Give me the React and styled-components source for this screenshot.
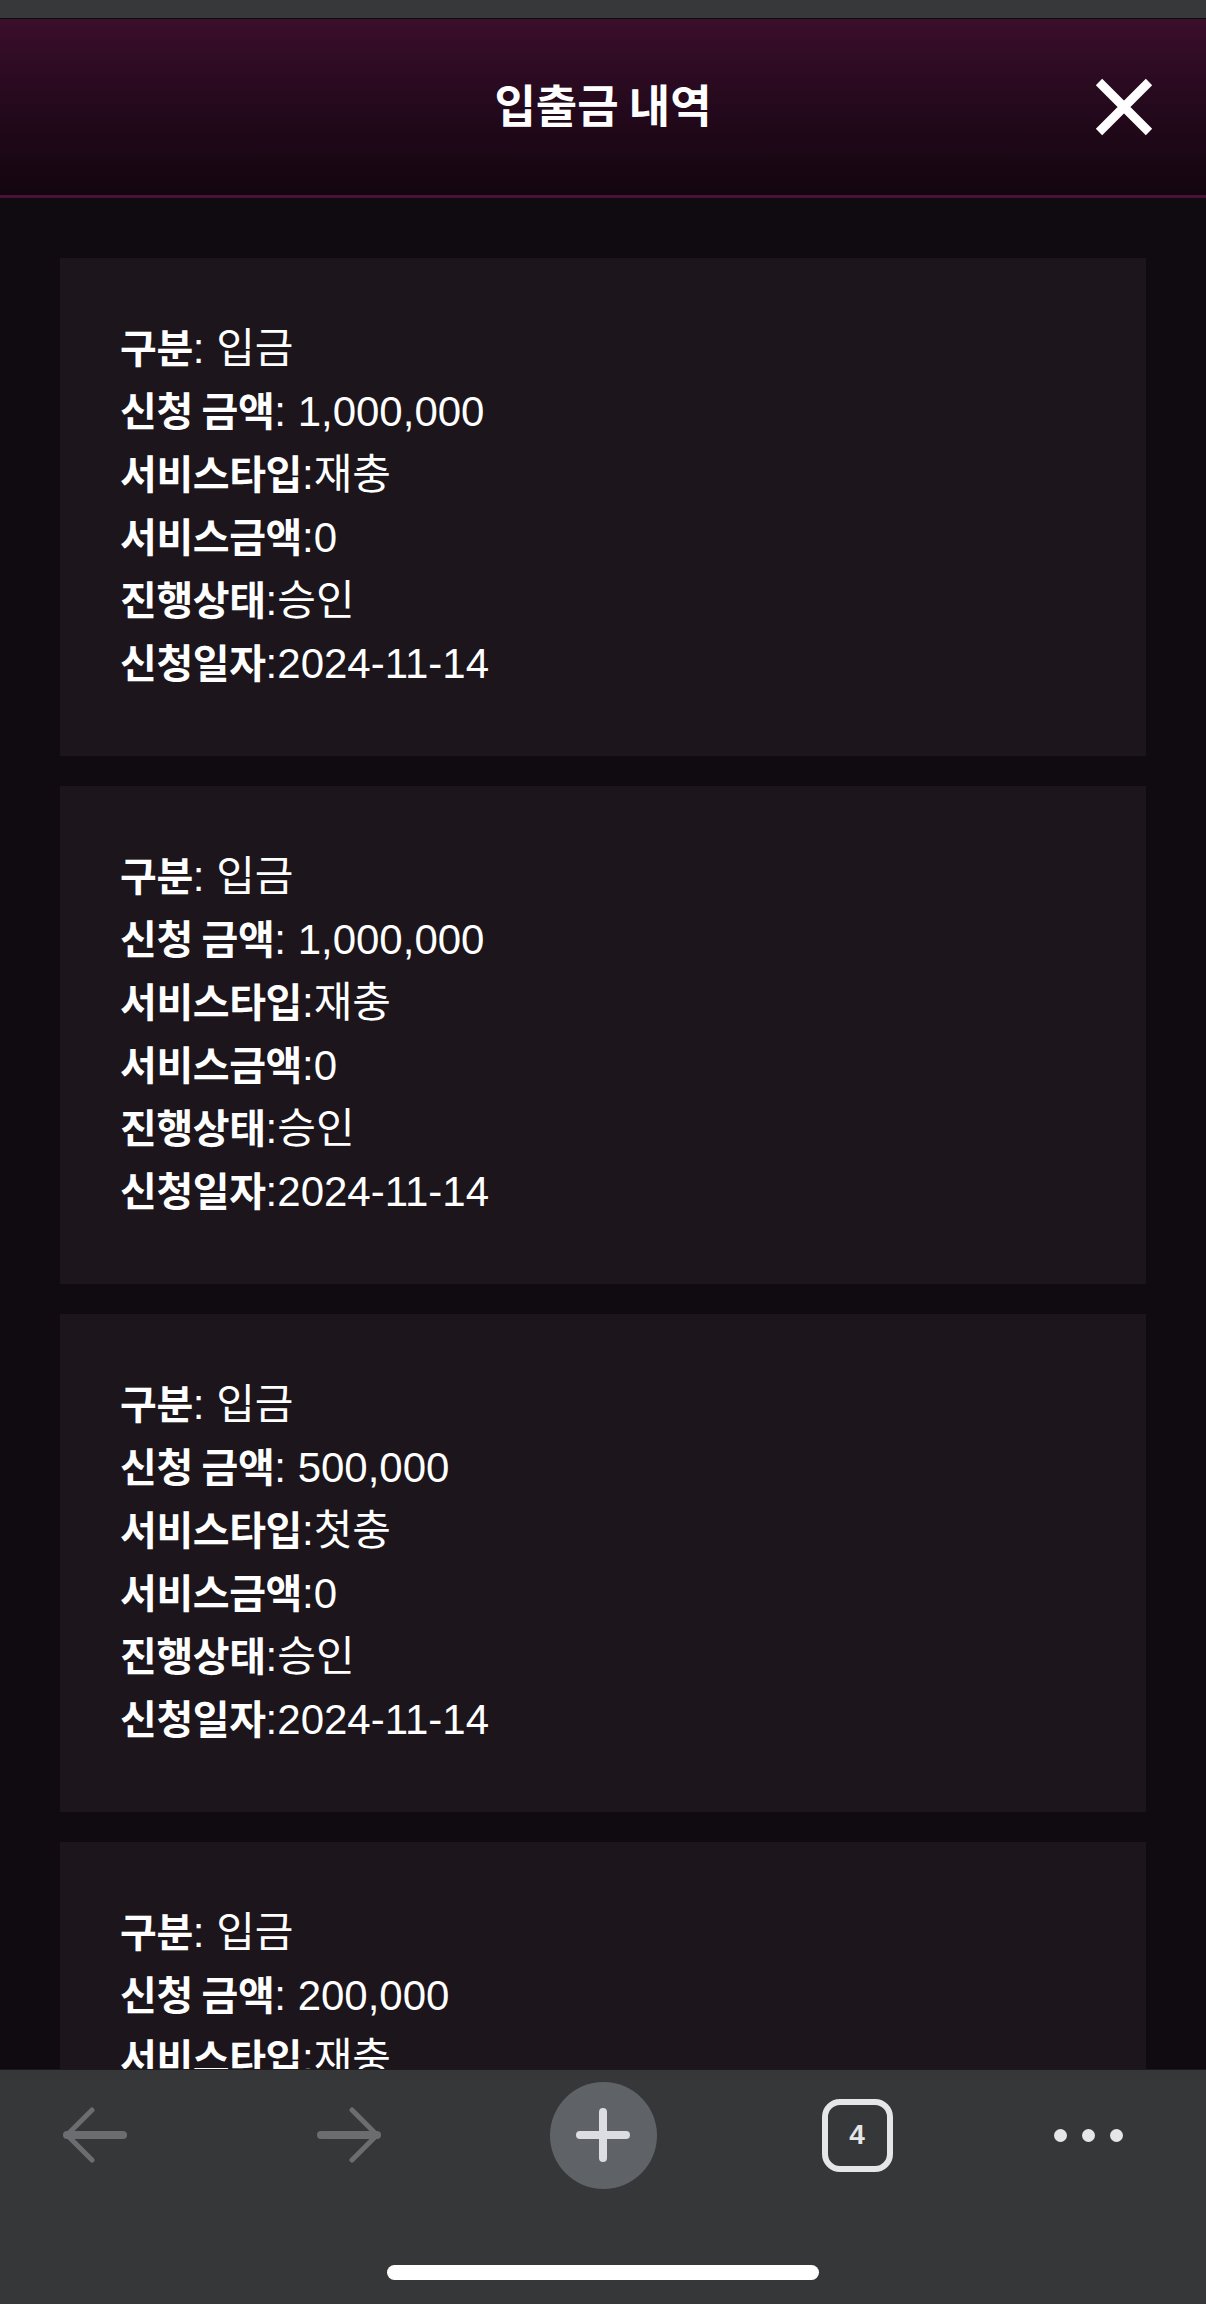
import styled, { createGlobalStyle } from "styled-components";

const GlobalStyle = createGlobalStyle`
  html, body {
    margin: 0;
    padding: 0;
    background: #0f0b10;
  }
  * {
    box-sizing: border-box;
  }
`;

const records = [
  { type: "입금", amount: "1,000,000", service: "재충", bonus: "0", status: "승인", date: "2024-11-14" },
  { type: "입금", amount: "1,000,000", service: "재충", bonus: "0", status: "승인", date: "2024-11-14" },
  { type: "입금", amount: "500,000", service: "첫충", bonus: "0", status: "승인", date: "2024-11-14" },
  { type: "입금", amount: "200,000", service: "재충", bonus: "0", status: "승인", date: "2024-11-14" },
];

function ArrowIcon({ flip }) {
  return (
    <svg
      width="66"
      height="56"
      viewBox="0 0 66 56"
      fill="none"
      stroke="#6c6d70"
      strokeLinecap="round"
      strokeLinejoin="round"
      style={flip ? { transform: "scaleX(-1)" } : undefined}
    >
      <path d="M5 28 H61" strokeWidth="8" />
      <path d="M30 3 L5 28 L30 53" strokeWidth="5" />
    </svg>
  );
}

function CloseIcon() {
  return (
    <svg width="58" height="58" viewBox="0 0 58 58" stroke="#ffffff" strokeWidth="9">
      <path d="M4 4 L54 54 M54 4 L4 54" />
    </svg>
  );
}

export default function App() {
  return (
    <>
      <GlobalStyle />
      <Frame>
        <StatusStrip />
        <Header>
          <span />
          <Title>입출금 내역</Title>
          <CloseButton aria-label="닫기">
            <CloseIcon />
          </CloseButton>
        </Header>

        <List>
          {records.map((r, i) => (
            <Card key={i}>
              <Line>
                <Label>구분</Label>
                <Value>: {r.type}</Value>
              </Line>
              <Line>
                <Label>신청 금액</Label>
                <Value>: {r.amount}</Value>
              </Line>
              <Line>
                <Label>서비스타입</Label>
                <Value>:{r.service}</Value>
              </Line>
              <Line>
                <Label>서비스금액</Label>
                <Value>:{r.bonus}</Value>
              </Line>
              <Line>
                <Label>진행상태</Label>
                <Value>:{r.status}</Value>
              </Line>
              <Line>
                <Label>신청일자</Label>
                <Value>:{r.date}</Value>
              </Line>
            </Card>
          ))}
        </List>

        <BottomBar>
          <IconRow>
            <Slot>
              <ArrowIcon />
            </Slot>
            <Slot>
              <ArrowIcon flip />
            </Slot>
            <Slot>
              <PlusButton>
                <svg width="56" height="56" viewBox="0 0 56 56" stroke="#dcdde0" strokeWidth="8" strokeLinecap="round">
                  <path d="M28 5 V51 M5 28 H51" />
                </svg>
              </PlusButton>
            </Slot>
            <Slot>
              <TabCount>4</TabCount>
            </Slot>
            <Slot>
              <Dots>
                <Dot />
                <Dot />
                <Dot />
              </Dots>
            </Slot>
          </IconRow>
          <HomeIndicator />
        </BottomBar>
      </Frame>
    </>
  );
}

const Frame = styled.div`
  height: 100vh;
  display: flex;
  flex-direction: column;
  overflow: hidden;
  background: #0f0b10;
  font-family: "Liberation Sans", "Noto Sans CJK KR", sans-serif;
  color: #ffffff;
`;

const StatusStrip = styled.div`
  flex: 0 0 19px;
  background: #37383a;
  border-bottom: 1px solid #0c0c0d;
`;

const Header = styled.header`
  flex: 0 0 179px;
  display: grid;
  grid-template-columns: 1fr auto 1fr;
  align-items: center;
  background: linear-gradient(180deg, #3b0e2c 0%, #24091c 50%, #13060f 100%);
  border-bottom: 3px solid #4b1237;
`;

const Title = styled.h1`
  margin: 0 0 8px;
  font-family: "Noto Sans CJK KR", sans-serif;
  font-size: 45px;
  font-weight: 700;
  letter-spacing: 0;
  color: #ffffff;
`;

const CloseButton = styled.button`
  justify-self: end;
  margin-right: 53px;
  padding: 0;
  border: 0;
  background: none;
  display: flex;
  line-height: 0;
`;

const List = styled.main`
  flex: 1;
  min-height: 0;
  overflow: hidden;
  display: flex;
  flex-direction: column;
  gap: 30px;
  padding: 60px 60px 0;
`;

const Card = styled.section`
  flex: 0 0 auto;
  background: #1c151c;
  padding: 58px 60px 62px;
`;

const Line = styled.p`
  margin: 0;
  height: 63px;
  display: flex;
  align-items: baseline;
  padding-top: 10px;
  white-space: nowrap;
`;

const Label = styled.strong`
  font-family: "Noto Sans CJK KR", sans-serif;
  font-size: 40px;
  line-height: 1;
  font-weight: 700;
  letter-spacing: -0.4px;
`;

const Value = styled.span`
  font-size: 42px;
  line-height: 1;
  font-weight: 400;
  white-space: pre;
`;

const BottomBar = styled.nav`
  position: fixed;
  left: 0;
  right: 0;
  bottom: 0;
  height: 235px;
  background: #363739;
  border-top: 1px solid #1a1a1b;
  display: flex;
  flex-direction: column;
  align-items: center;
  padding-top: 11px;
`;

const IconRow = styled.div`
  display: grid;
  grid-template-columns: repeat(4, 254px) 1fr;
  width: calc(100% + 32px);
  margin-left: -32px;
  height: 108px;
  align-items: center;
`;

const Slot = styled.div`
  display: flex;
  justify-content: center;
  align-items: center;
`;

const PlusButton = styled.div`
  width: 107px;
  height: 107px;
  border-radius: 50%;
  background: #5f6267;
  display: flex;
  align-items: center;
  justify-content: center;
`;

const TabCount = styled.div`
  width: 71px;
  height: 73px;
  border: 6px solid #e6e6e8;
  border-radius: 18px;
  display: flex;
  align-items: center;
  justify-content: center;
  font-family: "Liberation Sans", sans-serif;
  font-weight: 700;
  font-size: 28px;
  color: #e6e6e8;
`;

const Dots = styled.div`
  display: flex;
  gap: 15px;
  margin-left: -14px;
`;

const Dot = styled.span`
  width: 13px;
  height: 13px;
  border-radius: 50%;
  background: #e6e6e8;
`;

const HomeIndicator = styled.div`
  margin-top: 76px;
  width: 432px;
  height: 15px;
  border-radius: 8px;
  background: #ffffff;
`;
